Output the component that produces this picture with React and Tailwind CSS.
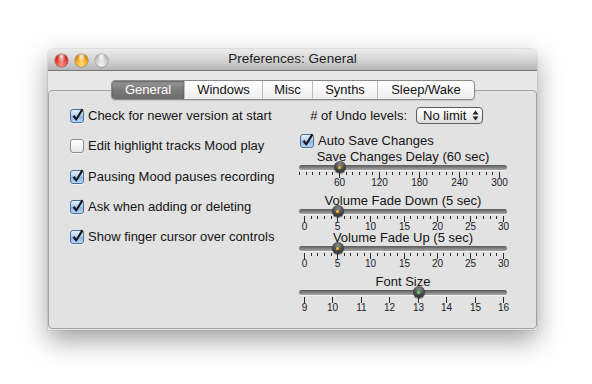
import React from "react";

function CheckBox({ checked }) {
  if (checked) {
    return (
      <div className="relative w-[14px] h-[14px] shrink-0 rounded-[3px] border border-[#4b6d9c] bg-[linear-gradient(to_bottom,#e6f0fb_0%,#b5d1f1_45%,#8ab5e6_55%,#b9d8f7_100%)] shadow-[0_1px_0_rgba(255,255,255,0.5)]">
        <svg className="absolute left-[-1px] top-[-1px] overflow-visible" width="14" height="14" viewBox="0 0 14 14">
          <path d="M2.6 7.4 L4.6 6.1 L6.1 8.7 L11.6 -0.4 L13.4 0.9 L6.3 12 Z" fill="#151515" />
        </svg>
      </div>
    );
  }
  return (
    <div className="w-[14px] h-[14px] shrink-0 rounded-[3px] border border-[#8d8d8d] bg-[linear-gradient(to_bottom,#ffffff_0%,#f3f3f3_50%,#e6e6e6_100%)] shadow-[0_1px_0_rgba(255,255,255,0.5)]" />
  );
}

function CheckRow({ checked, label }) {
  return (
    <div className="h-[30.3px] flex items-center gap-[4px]">
      <CheckBox checked={checked} />
      <span className="text-[13px] leading-[16px] text-[#141414] whitespace-nowrap">{label}</span>
    </div>
  );
}

function Slider({ label, min, max, value, ticks, labels, green, x0 = 5, x1 = 204 }) {
  const pos = (v) => x0 + ((v - min) / (max - min)) * (x1 - x0);
  const tickVals = [];
  for (let i = 0; i < ticks; i++) tickVals.push(min + (i * (max - min)) / (ticks - 1));
  return (
    <div className="flex flex-col w-[208px]">
      <div className="h-[14px] pt-px leading-[12px] text-[13px] text-center whitespace-nowrap text-[#141414]">{label}</div>
      <div className="relative mt-px h-[5px] rounded-full bg-[linear-gradient(to_bottom,#5a5a5a_0%,#7c7c7c_45%,#a9a9a9_100%)] shadow-[0_1px_0_rgba(255,255,255,0.6)]">
        <div
          className="absolute top-[-4px] w-[12px] h-[12px] rounded-full flex items-center justify-center bg-[radial-gradient(circle_at_50%_30%,#8c8c8c_0%,#4a4a4a_50%,#1f1f1f_100%)] shadow-[0_1px_1px_rgba(0,0,0,0.45)]"
          style={{ left: Math.round(pos(value)) - 5.5 }}
        >
          {green ? (
            <div className="w-[3px] h-[3px] rounded-full bg-[#44e060]" />
          ) : (
            <div className="w-[3px] h-[3px] rounded-full bg-[#ffb21e]" />
          )}
        </div>
      </div>
      <div className="relative mt-[2px] h-[6px]">
        {tickVals.map((v, i) => {
          const major = labels.some((l) => Math.abs(l - v) < 0.001);
          return (
            <div
              key={i}
              className={major ? "absolute top-0 w-px h-[6px] bg-[#2a2a2a]" : "absolute top-0 w-px h-[3px] bg-[#2a2a2a]"}
              style={{ left: Math.round(pos(v)) }}
            />
          );
        })}
      </div>
      <div className="relative -mt-px h-[9px] text-[10px] leading-[9px] text-[#1a1a2a]">
        {labels.map((l) => (
          <span key={l} className="absolute top-[0.5px] -translate-x-1/2 whitespace-nowrap" style={{ left: Math.round(pos(l)) + 0.5 }}>
            {l}
          </span>
        ))}
      </div>
    </div>
  );
}

function Tab({ label, selected, first, w }) {
  if (selected) {
    return (
      <div className={`${w} h-full flex items-center justify-center text-[13px] text-white bg-[linear-gradient(to_bottom,#9a9a9a_0%,#7a7a7a_50%,#6c6c6c_100%)] shadow-[inset_0_1px_2px_rgba(0,0,0,0.35)]`}>
        {label}
      </div>
    );
  }
  return (
    <div className={`${w} h-full flex items-center justify-center text-[13px] text-[#111] ${first ? "" : "border-l border-[#bcbcbc]"}`}>
      {label}
    </div>
  );
}

export default function App() {
  return (
    <div className="w-[592px] h-[384px] bg-white pt-[49px] pl-[48px] font-['Liberation_Sans',Arial,sans-serif] overflow-hidden">
      <div className="w-[489px] h-[281px] flex flex-col rounded-t-[5px] bg-[#e8e8e8] shadow-[0_10px_26px_rgba(0,0,0,0.38),0_0_0_1px_rgba(0,0,0,0.06)]">
        {/* title bar */}
        <div className="h-[22px] shrink-0 grid grid-cols-[1fr_auto_1fr] items-center rounded-t-[5px] border-b border-[#767676] bg-[linear-gradient(to_bottom,#ececec_0%,#d6d6d6_50%,#b6b6b6_100%)]">
          <div className="flex items-center gap-[7px] pl-[7px] pt-px">
            <div className="w-[13px] h-[13px] rounded-full shadow-[0_0_0_0.5px_rgba(90,0,0,0.6)] bg-[radial-gradient(ellipse_at_50%_20%,rgba(255,255,255,0.9)_0%,rgba(255,255,255,0)_45%),radial-gradient(circle_at_50%_80%,#ff9b8c_0%,#e03a2e_50%,#9c130c_100%)]" />
            <div className="w-[13px] h-[13px] rounded-full shadow-[0_0_0_0.5px_rgba(110,60,0,0.6)] bg-[radial-gradient(ellipse_at_50%_20%,rgba(255,255,255,0.9)_0%,rgba(255,255,255,0)_45%),radial-gradient(circle_at_50%_80%,#ffe27a_0%,#f0a215_50%,#a86300_100%)]" />
            <div className="w-[13px] h-[13px] rounded-full shadow-[0_0_0_0.5px_rgba(0,0,0,0.35)] bg-[radial-gradient(ellipse_at_50%_20%,rgba(255,255,255,0.95)_0%,rgba(255,255,255,0)_45%),radial-gradient(circle_at_50%_80%,#f4f4f4_0%,#cacaca_50%,#909090_100%)]" />
          </div>
          <div className="text-[13.5px] text-[#222] whitespace-nowrap">Preferences: General</div>
          <div />
        </div>

        {/* tabs */}
        <div className="relative z-10 mt-[9px] h-[20px] pl-[63px] flex">
          <div className="flex h-[20px] rounded-[4px] border border-[#8a8a8a] overflow-hidden bg-[linear-gradient(to_bottom,#ffffff_0%,#f8f8f8_50%,#ececec_100%)] shadow-[0_1px_1px_rgba(0,0,0,0.12)]">
            <Tab label="General" selected first w="w-[72px]" />
            <Tab label="Windows" w="w-[78px]" />
            <Tab label="Misc" w="w-[50px]" />
            <Tab label="Synths" w="w-[65px]" />
            <Tab label="Sleep/Wake" w="w-[97px]" />
          </div>
        </div>

        {/* group box */}
        <div className="-mt-[10px] mb-px flex-1 flex rounded-[4px] border border-[#a2a2a2] bg-[#e2e2e2]">
          <div className="w-[250px] pl-[21px] pt-[10px] flex flex-col">
            <CheckRow checked label="Check for newer version at start" />
            <CheckRow checked={false} label="Edit highlight tracks Mood play" />
            <CheckRow checked label="Pausing Mood pauses recording" />
            <CheckRow checked label="Ask when adding or deleting" />
            <CheckRow checked label="Show finger cursor over controls" />
          </div>
          <div className="w-[208px] flex flex-col">
            <div className="mt-[16px] h-[17px] flex items-center justify-end gap-[9px] pr-[24px]">
              <span className="text-[13px] text-[#141414] whitespace-nowrap">{"# of Undo levels:"}</span>
              <div className="w-[67px] h-[17px] shrink-0 flex items-center justify-between pl-[6px] pr-[3px] rounded-[4px] border border-[#5c5c5c] bg-[linear-gradient(to_bottom,#ffffff_0%,#f2f2f2_50%,#dedede_100%)]">
                <span className="text-[13px] leading-[15px] text-[#111]">No limit</span>
                <svg width="7" height="11" viewBox="0 0 7 11">
                  <path d="M3.5 0.5 L6.5 4.5 L0.5 4.5 Z" fill="#222" />
                  <path d="M0.5 6.5 L6.5 6.5 L3.5 10.5 Z" fill="#222" />
                </svg>
              </div>
            </div>
            <div className="mt-[10px] h-[14px] flex items-center gap-[4px] pl-px">
              <CheckBox checked />
              <span className="text-[13px] leading-[16px] text-[#141414] whitespace-nowrap">Auto Save Changes</span>
            </div>
            <div className="mt-[2px]">
              <Slider label="Save Changes Delay (60 sec)" min={0} max={300} value={60} ticks={31} labels={[60, 120, 180, 240, 300]} x0={0} x1={200} />
            </div>
            <div className="mt-[8px]">
              <Slider label="Volume Fade Down (5 sec)" min={0} max={30} value={5} ticks={31} labels={[0, 5, 10, 15, 20, 25, 30]} />
            </div>
            <div className="mt-px">
              <Slider label="Volume Fade Up (5 sec)" min={0} max={30} value={5} ticks={31} labels={[0, 5, 10, 15, 20, 25, 30]} />
            </div>
            <div className="mt-[8px]">
              <Slider label="Font Size" min={9} max={16} value={13} ticks={8} labels={[9, 10, 11, 12, 13, 14, 15, 16]} green />
            </div>
          </div>
        </div>
      </div>
    </div>
  );
}
